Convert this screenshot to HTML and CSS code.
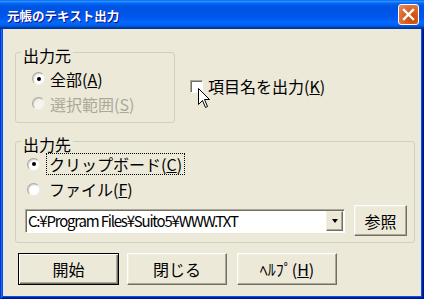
FILE: index.html
```html
<!DOCTYPE html>
<html lang="ja">
<head>
    <meta charset="UTF-8">
    <title>元帳のテキスト出力</title>
    <link rel="stylesheet" href="styles.css">
</head>
<body>
    <div class="window">
        <div class="titlebar">
            <span class="title">元帳のテキスト出力</span>
            <span class="close">
                <svg width="13" height="13" viewBox="0 0 13 13">
                    <path d="M2 2 L11 11 M11 2 L2 11" stroke="#fff" stroke-width="2.4" stroke-linecap="square"/>
                </svg>
            </span>
        </div>
        <div class="frame">
            <div class="client">
                <div class="top-row">
                    <fieldset class="group source">
                        <legend>出力元</legend>
                        <div class="radio-row">
                            <span class="radio checked"></span>
                            <span class="label">全部(<u>A</u>)</span>
                        </div>
                        <div class="radio-row disabled">
                            <span class="radio"></span>
                            <span class="label">選択範囲(<u>S</u>)</span>
                        </div>
                    </fieldset>
                    <div class="check-row">
                        <span class="checkbox"></span>
                        <span class="label">項目名を出力(<u>K</u>)</span>
                    </div>
                </div>

                <fieldset class="group dest">
                    <legend>出力先</legend>
                    <div class="radio-row first">
                        <span class="radio checked"></span>
                        <span class="label focus">クリップボード(<u>C</u>)</span>
                    </div>
                    <div class="radio-row second">
                        <span class="radio"></span>
                        <span class="label">ファイル(<u>F</u>)</span>
                    </div>
                    <div class="file-row">
                        <div class="combo">
                            <span class="combo-text">C:¥Program Files¥Suito5¥WWW.TXT</span>
                            <span class="combo-btn"><span class="arrow"></span></span>
                        </div>
                        <button class="btn browse">参照</button>
                    </div>
                </fieldset>

                <div class="buttons">
                    <button class="btn default start">開始</button>
                    <button class="btn close-btn">閉じる</button>
                    <button class="btn help">ﾍﾙﾌﾟ(<u>H</u>)</button>
                </div>
            </div>
        </div>

        <svg class="cursor" width="13" height="21" viewBox="0 0 13 21">
            <path d="M0.5 0.5 L0.5 16.5 L4.5 12.5 L7.5 19.5 L9.5 18.5 L6.5 11.5 L11.5 11.5 Z" fill="#fff" stroke="#000" stroke-width="1"/>
        </svg>
    </div>
</body>
</html>
```

FILE: styles.css
```css
* {
    box-sizing: border-box;
}

body {
    margin: 0;
    font-family: "Noto Sans CJK JP", sans-serif;
    font-size: 16px;
    color: #000;
}

.window {
    position: relative;
    width: 424px;
    height: 299px;
    display: flex;
    flex-direction: column;
}

.titlebar {
    height: 29px;
    display: flex;
    align-items: center;
    justify-content: space-between;
    padding: 0 5px 0 7px;
    background: linear-gradient(to bottom, #0058ee 0%, #3593ff 4%, #288eff 6%, #127dff 8%, #036ffc 10%, #0262ee 14%, #0057e5 20%, #0054e3 24%, #0055eb 56%, #005bf5 66%, #026afe 76%, #0062ef 86%, #0052d6 92%, #0040ab 94%, #003092 100%);
}

.title {
    color: #fff;
    font-size: 12.5px;
    font-weight: bold;
    text-shadow: 1px 1px #0f1089;
    padding-top: 1px;
}

.close {
    width: 21px;
    height: 21px;
    border: 1px solid #fff;
    border-radius: 3px;
    background: radial-gradient(circle at 70% 70%, #cc4600 0%, #dc6527 50%, #e58e6a 100%);
    display: flex;
    align-items: center;
    justify-content: center;
}

.frame {
    flex: 1;
    padding: 0 3px 3px;
    background: #0054e3;
    box-shadow: inset 1px 0 #0831d9, inset -1px -1px #00138c, inset 2px 0 #166aee, inset -2px -2px #001ea0;
    display: flex;
}

.client {
    flex: 1;
    background: #ece9d8;
    padding: 12px 6px 0 12px;
    display: flex;
    flex-direction: column;
}

.top-row {
    display: flex;
    align-items: flex-start;
}

.group {
    margin: 0;
    padding: 0 0 6px;
    border: 1px solid #d0d0bf;
    border-radius: 3px;
    min-width: 0;
}

.group legend {
    margin-left: 5px;
    padding: 6px 2px 0;
    line-height: 16px;
}

.source {
    width: 160px;
}

.source .radio-row {
    height: 25px;
    padding-left: 16px;
}

.source .radio-row:first-of-type {
    margin-top: 3px;
}

.radio-row {
    display: flex;
    align-items: center;
    line-height: 20px;
}

.radio {
    width: 13px;
    height: 13px;
    border-radius: 50%;
    background: #fff;
    border: 1px solid;
    border-color: #aca899 #f1efe2 #f1efe2 #aca899;
    box-shadow: inset 1px 1px #d4d0c8;
    display: flex;
    align-items: center;
    justify-content: center;
    margin-right: 5px;
}

.radio.checked::after {
    content: "";
    width: 4px;
    height: 4px;
    border-radius: 50%;
    background: #000;
}

.disabled .label {
    color: #aca899;
}

.disabled .radio {
    background: #f4f3ee;
}

.check-row {
    display: flex;
    align-items: center;
    line-height: 20px;
    margin: 35px 0 0 15px;
}

.checkbox {
    width: 13px;
    height: 13px;
    background: #fff;
    border: 1px solid;
    border-color: #aca899 #fff #fff #aca899;
    box-shadow: inset 1px 1px #716f64;
    margin-right: 5px;
}

.dest {
    margin-top: 7px;
}

.dest .radio-row {
    padding-left: 11px;
}

.dest .radio {
    margin-right: 6px;
}

.dest .label {
    padding: 0 2px;
    border: 1px solid transparent;
}

.dest .first {
    height: 24px;
}

.dest .second {
    height: 26px;
}

.label.focus {
    border: 1px dotted #000;
}

.file-row {
    margin-top: 3px;
    height: 31px;
    display: flex;
    align-items: center;
    gap: 9px;
    padding: 0 7px 0 9px;
}

.combo {
    width: 320px;
    height: 24px;
    background: #fff;
    border: 1px solid;
    border-color: #aca899 #fff #fff #aca899;
    box-shadow: inset 1px 1px #716f64;
    display: flex;
    align-items: center;
    padding: 0 1px 0 2px;
}

.combo-text {
    flex: 1;
    font-size: 15px;
    letter-spacing: -1.2px;
    line-height: 20px;
    white-space: nowrap;
    overflow: hidden;
}

.combo-btn {
    width: 17px;
    height: 20px;
    margin-top: 1px;
    background: #ece9d8;
    border: 1px solid;
    border-color: #f1efe2 #716f64 #716f64 #f1efe2;
    box-shadow: inset -1px -1px #aca899;
    display: flex;
    align-items: center;
    justify-content: center;
}

.arrow {
    width: 0;
    height: 0;
    border-left: 3.5px solid transparent;
    border-right: 3.5px solid transparent;
    border-top: 4px solid #000;
}

.btn {
    font: inherit;
    color: #000;
    padding: 0;
    background: #ece9d8;
    border: 1px solid;
    border-color: #fff #716f64 #716f64 #fff;
    box-shadow: inset -1px -1px #aca899, inset 1px 1px #f1efe2;
    line-height: 20px;
}

.browse {
    width: 53px;
    height: 31px;
}

.buttons {
    display: flex;
    margin-top: 10px;
}

.buttons .btn {
    height: 32px;
    width: 100px;
}

.btn.default {
    border-color: #000;
    box-shadow: inset 1px 1px #fff, inset -1px -1px #716f64, inset -2px -2px #aca899;
}

.start {
    margin-left: 3px;
    width: 101px !important;
}

.close-btn {
    margin-left: 8px;
}

.help {
    margin-left: 10px;
}

.cursor {
    position: absolute;
    left: 198px;
    top: 88px;
}
```
